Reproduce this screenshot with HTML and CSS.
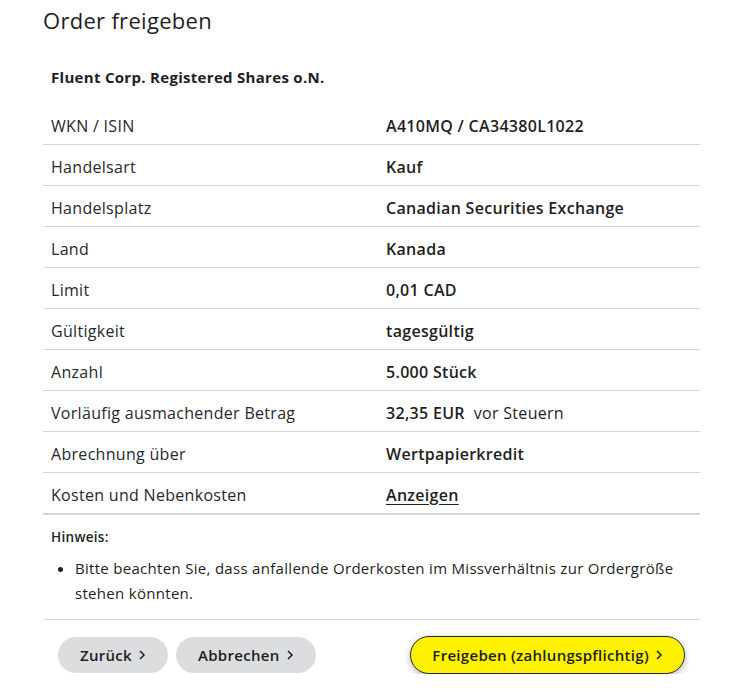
FILE: index.html
```html
<!DOCTYPE html>
<html lang="de">
<head>
<meta charset="utf-8">
<title>Order freigeben</title>
<link rel="stylesheet" href="styles.css">
</head>
<body>
<main class="page">
  <h1 class="title">Order freigeben</h1>
  <h2 class="security">Fluent Corp. Registered Shares o.N.</h2>
  <div class="table">
    <div class="row"><span class="label">WKN / ISIN</span><span class="value">A410MQ / CA34380L1022</span></div>
    <div class="row"><span class="label">Handelsart</span><span class="value">Kauf</span></div>
    <div class="row"><span class="label">Handelsplatz</span><span class="value">Canadian Securities Exchange</span></div>
    <div class="row"><span class="label">Land</span><span class="value">Kanada</span></div>
    <div class="row"><span class="label">Limit</span><span class="value">0,01 CAD</span></div>
    <div class="row"><span class="label">Gültigkeit</span><span class="value">tagesgültig</span></div>
    <div class="row"><span class="label">Anzahl</span><span class="value">5.000 Stück</span></div>
    <div class="row"><span class="label">Vorläufig ausmachender Betrag</span><span class="value">32,35 EUR <span class="light">&nbsp;vor Steuern</span></span></div>
    <div class="row"><span class="label">Abrechnung über</span><span class="value">Wertpapierkredit</span></div>
    <div class="row last"><span class="label">Kosten und Nebenkosten</span><span class="value"><a class="link" href="#">Anzeigen</a></span></div>
  </div>
  <section class="note">
    <div class="note-title">Hinweis:</div>
    <ul class="note-list">
      <li>Bitte beachten Sie, dass anfallende Orderkosten im Missverhältnis zur Ordergröße stehen könnten.</li>
    </ul>
  </section>
  <div class="actions">
    <div class="left-actions">
      <button class="btn btn-gray">Zurück <svg class="chev" viewBox="0 0 8 12" width="8" height="12"><path d="M2 2l4 4-4 4" fill="none" stroke="currentColor" stroke-width="1.5"/></svg></button>
      <button class="btn btn-gray">Abbrechen <svg class="chev" viewBox="0 0 8 12" width="8" height="12"><path d="M2 2l4 4-4 4" fill="none" stroke="currentColor" stroke-width="1.5"/></svg></button>
    </div>
    <button class="btn btn-yellow">Freigeben (zahlungspflichtig) <svg class="chev" viewBox="0 0 8 12" width="8" height="12"><path d="M2 2l4 4-4 4" fill="none" stroke="currentColor" stroke-width="1.5"/></svg></button>
  </div>
</main>
</body>
</html>
```

FILE: styles.css
```css
html, body {
  margin: 0;
  padding: 0;
  background: #fff;
}
body {
  font-family: "Open Sans", "Noto Sans", sans-serif;
  color: #1e1e23;
  letter-spacing: 0.3px;
}
.page {
  width: 657px;
  margin-left: 43px;
}
.title {
  margin: 0;
  padding-top: 6px;
  font-size: 22px;
  line-height: 28px;
  font-weight: 400;
  letter-spacing: 0.3px;
}
.security {
  margin: 33px 0 0 8px;
  font-size: 15px;
  line-height: 20px;
  font-weight: 700;
}
.table {
  margin-top: 17px;
}
.row {
  box-sizing: border-box;
  display: grid;
  grid-template-columns: 335px 1fr;
  height: 41px;
  padding-top: 3px;
  align-items: center;
  border-bottom: 1px solid #d4d5d7;
  padding-left: 8px;
  font-size: 16px;
}
.row.last {
  border-bottom-width: 2px;
  height: 42px;
}
.label {
  font-weight: 400;
  color: #28282d;
}
.value {
  font-weight: 600;
  color: #1e1e23;
}
.light {
  font-weight: 400;
}
.link {
  color: inherit;
  text-decoration: underline;
  text-underline-offset: 3px;
}
.note {
  padding: 12px 0 13px 8px;
  border-bottom: 1px solid #d4d5d7;
}
.note-title {
  font-size: 13.5px;
  line-height: 20px;
  font-weight: 600;
}
.note-list {
  margin: 9px 0 0 0;
  padding-left: 24px;
  font-size: 15px;
  line-height: 25px;
}
.actions {
  display: flex;
  justify-content: space-between;
  align-items: center;
  padding: 16px 15px 0 15px;
}
.left-actions {
  display: flex;
  gap: 8px;
}
.btn {
  display: inline-flex;
  align-items: center;
  gap: 6px;
  font-family: inherit;
  font-size: 15px;
  font-weight: 600;
  letter-spacing: 0.3px;
  color: #1e1e23;
  border-radius: 19px;
  cursor: pointer;
}
.btn-gray {
  height: 36px;
  padding: 0 22px;
  background: #dcdddf;
  border: none;
}
.btn-yellow {
  height: 38px;
  padding: 0 21px;
  background: #fff200;
  border: 1px solid #2a2a2a;
  box-shadow: 0 2px 6px rgba(0, 0, 0, 0.3);
}
.chev {
  display: block;
}
```
